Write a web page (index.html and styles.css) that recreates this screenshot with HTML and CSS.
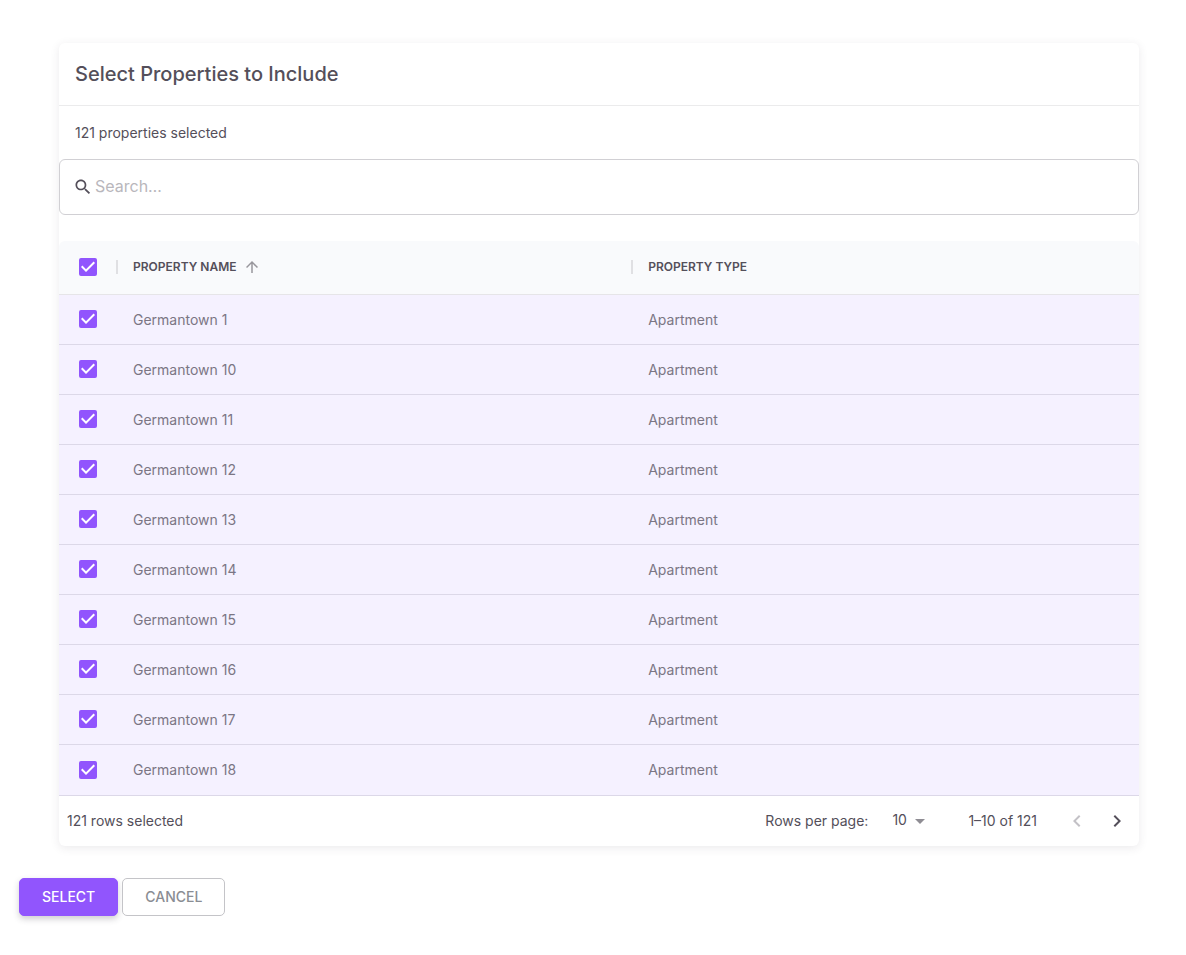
FILE: index.html
```html
<!DOCTYPE html>
<html lang="en">
<head>
<meta charset="utf-8">
<meta name="viewport" content="width=device-width, initial-scale=1">
<title>Select Properties to Include</title>
<link rel="stylesheet" href="styles.css">
</head>
<body>
<svg class="defs" aria-hidden="true">
  <symbol id="tick" viewBox="3 3 18 18"><path d="M10 17l-5-5 1.41-1.41L10 14.17l7.59-7.59L19 8l-9 9z"/></symbol>
</svg>
<main class="page">
  <section class="card">
    <header class="card-header"><h1 class="card-title">Select Properties to Include</h1></header>
    <p class="summary">121 properties selected</p>
    <label class="search">
      <svg class="search-icon" viewBox="0 0 24 24" aria-hidden="true"><path d="M15.5 14h-.79l-.28-.27C15.41 12.59 16 11.11 16 9.5 16 5.91 13.09 3 9.5 3S3 5.91 3 9.5 5.91 16 9.5 16c1.61 0 3.09-.59 4.23-1.57l.27.28v.79l5 4.99L20.49 19l-4.99-5zm-6 0C7.01 14 5 11.99 5 9.5S7.01 5 9.5 5 14 7.01 14 9.5 11.99 14 9.5 14z"/></svg>
      <input class="search-input" type="text" placeholder="Search…" aria-label="Search">
    </label>
    <table class="grid">
      <colgroup><col class="col-check"><col class="col-name"><col></colgroup>
      <thead>
        <tr>
          <th><label class="check"><input type="checkbox" checked aria-label="Select all rows"><svg><use href="#tick"/></svg></label></th>
          <th aria-sort="ascending"><div class="head"><span class="separator"></span><span>PROPERTY NAME</span><svg class="sort" viewBox="0 0 24 24" aria-hidden="true"><path d="M4 12l1.41 1.41L11 7.83V20h2V7.83l5.58 5.59L20 12l-8-8-8 8z"/></svg></div></th>
          <th><div class="head"><span class="separator"></span><span>PROPERTY TYPE</span></div></th>
        </tr>
      </thead>
      <tbody>
        <tr><td><label class="check"><input type="checkbox" checked aria-label="Select Germantown 1"><svg><use href="#tick"/></svg></label></td><td>Germantown 1</td><td>Apartment</td></tr>
        <tr><td><label class="check"><input type="checkbox" checked aria-label="Select Germantown 10"><svg><use href="#tick"/></svg></label></td><td>Germantown 10</td><td>Apartment</td></tr>
        <tr><td><label class="check"><input type="checkbox" checked aria-label="Select Germantown 11"><svg><use href="#tick"/></svg></label></td><td>Germantown 11</td><td>Apartment</td></tr>
        <tr><td><label class="check"><input type="checkbox" checked aria-label="Select Germantown 12"><svg><use href="#tick"/></svg></label></td><td>Germantown 12</td><td>Apartment</td></tr>
        <tr><td><label class="check"><input type="checkbox" checked aria-label="Select Germantown 13"><svg><use href="#tick"/></svg></label></td><td>Germantown 13</td><td>Apartment</td></tr>
        <tr><td><label class="check"><input type="checkbox" checked aria-label="Select Germantown 14"><svg><use href="#tick"/></svg></label></td><td>Germantown 14</td><td>Apartment</td></tr>
        <tr><td><label class="check"><input type="checkbox" checked aria-label="Select Germantown 15"><svg><use href="#tick"/></svg></label></td><td>Germantown 15</td><td>Apartment</td></tr>
        <tr><td><label class="check"><input type="checkbox" checked aria-label="Select Germantown 16"><svg><use href="#tick"/></svg></label></td><td>Germantown 16</td><td>Apartment</td></tr>
        <tr><td><label class="check"><input type="checkbox" checked aria-label="Select Germantown 17"><svg><use href="#tick"/></svg></label></td><td>Germantown 17</td><td>Apartment</td></tr>
        <tr><td><label class="check"><input type="checkbox" checked aria-label="Select Germantown 18"><svg><use href="#tick"/></svg></label></td><td>Germantown 18</td><td>Apartment</td></tr>
      </tbody>
    </table>
    <footer class="card-footer">
      <span class="selected-count">121 rows selected</span>
      <label for="page-size">Rows per page:</label>
      <span class="page-size">
        <select id="page-size"><option>10</option><option>25</option><option>50</option></select>
        <svg viewBox="0 0 24 24" aria-hidden="true"><path d="M7 10l5 5 5-5z"/></svg>
      </span>
      <span class="range">1–10 of 121</span>
      <button class="pager" type="button" disabled aria-label="Previous page"><svg viewBox="0 0 24 24"><path d="M15.41 16.59L10.83 12l4.58-4.59L14 6l-6 6 6 6 1.41-1.41z"/></svg></button>
      <button class="pager" type="button" aria-label="Next page"><svg viewBox="0 0 24 24"><path d="M8.59 16.59L13.17 12 8.59 7.41 10 6l6 6-6 6-1.41-1.41z"/></svg></button>
    </footer>
  </section>
  <div class="actions">
    <button class="button button-primary" type="button">SELECT</button>
    <button class="button button-outline" type="button">CANCEL</button>
  </div>
</main>
</body>
</html>
```

FILE: styles.css
```css
* {
  box-sizing: border-box;
}

body {
  margin: 0;
  background: #fff;
  color: #544f5a;
  font-family: Inter, "Liberation Sans", sans-serif;
  font-size: 14px;
  line-height: 20px;
}

button,
input,
select {
  margin: 0;
  font: inherit;
  color: inherit;
}

svg {
  display: block;
  fill: currentColor;
}

.defs {
  display: none;
}

.page {
  padding: 43px 47px 32px 19px;
}

.card {
  margin-left: 40px;
  border-radius: 6px;
  background: #fff;
  box-shadow: 0 2px 10px rgba(58, 53, 65, 0.1);
}

.card-header {
  padding: 15px 16px;
  border-bottom: 1px solid #ebebec;
}

.card-title {
  margin: 0;
  font-size: 20px;
  font-weight: 500;
  line-height: 32px;
}

.summary {
  margin: 0;
  padding: 17px 16px 16px;
}

.search {
  display: flex;
  align-items: center;
  gap: 2px;
  height: 56px;
  padding: 0 13px;
  border: 1px solid #d1d0d4;
  border-radius: 6px;
}

.search-icon {
  flex: none;
  width: 20px;
  height: 20px;
}

.search-input {
  flex: 1;
  min-width: 0;
  padding: 0 0 2px;
  border: 0;
  outline: 0;
  background: none;
  font-size: 16px;
  line-height: 24px;
}

.search-input::placeholder {
  color: #b9b7bc;
  opacity: 1;
}

.grid {
  width: 100%;
  margin-top: 26px;
  border-collapse: separate;
  border-spacing: 0;
  table-layout: fixed;
}

.col-check {
  width: 57px;
}

.col-name {
  width: 47.7%;
}

.grid th {
  height: 54px;
  padding: 0 0 2px;
  border-bottom: 1px solid #e6e5e8;
  background: #f9fafc;
  font-size: 12px;
  font-weight: 600;
  text-align: left;
}

.grid th:first-child {
  border-top-left-radius: 6px;
}

.grid th:last-child {
  border-top-right-radius: 6px;
}

.grid td {
  height: 50px;
  padding: 1px 17px 0;
  border-bottom: 1px solid #dcd8e8;
  background: #f5f1ff;
  color: #7b7684;
}

.grid td:first-child {
  padding: 0 0 1px;
}

.grid tr:last-child td {
  height: 51px;
  padding-top: 0;
}

.grid tr:last-child td:first-child {
  padding: 0;
}

.head {
  display: flex;
  align-items: center;
}

.separator {
  width: 2px;
  height: 14px;
  margin-right: 15px;
  background: #e0e0e3;
}

.sort {
  width: 18px;
  height: 18px;
  margin-left: 7px;
  color: #98969c;
}

.check {
  display: grid;
  width: 18px;
  height: 18px;
  margin-left: 20px;
}

.check input,
.check svg {
  grid-area: 1 / 1;
  width: 18px;
  height: 18px;
}

.check input {
  appearance: none;
  border: 2px solid #9155fd;
  border-radius: 2px;
}

.check input:checked {
  background: #9155fd;
}

.check svg {
  color: #fff;
  pointer-events: none;
}

.card-footer {
  display: flex;
  align-items: center;
  height: 50px;
  padding: 0 2px 0 8px;
}

.selected-count {
  margin-right: auto;
}

.page-size {
  display: grid;
  align-items: center;
  width: 40px;
  margin: 0 36px 0 24px;
}

.page-size select,
.page-size svg {
  grid-area: 1 / 1;
}

.page-size select {
  width: 40px;
  padding: 0 24px 2px 0;
  border: 0;
  background: none;
  appearance: none;
}

.page-size svg {
  justify-self: end;
  width: 24px;
  height: 24px;
  color: #8f8d94;
  pointer-events: none;
}

.range {
  margin-right: 20px;
}

.pager {
  width: 40px;
  height: 40px;
  padding: 8px;
  border: 0;
  background: none;
}

.pager:disabled {
  color: #c3c1c6;
}

.pager svg {
  width: 24px;
  height: 24px;
}

.actions {
  display: flex;
  gap: 4px;
  margin-top: 32px;
}

.button {
  height: 38px;
  padding: 0 22px;
  border: 1px solid #c4c4c8;
  border-radius: 5px;
  background: #fff;
  color: #8a8d93;
  font-weight: 500;
}

.button-primary {
  border-color: #9155fd;
  background: #9155fd;
  color: #fff;
  box-shadow: 0 3px 6px rgba(58, 53, 65, 0.24);
}
```
